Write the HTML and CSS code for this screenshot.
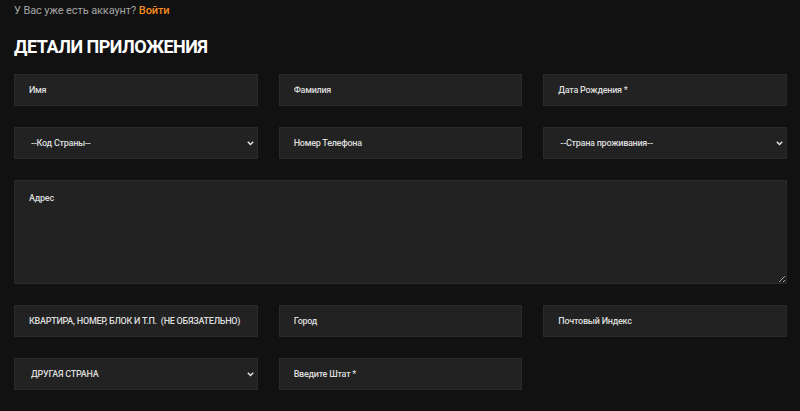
FILE: index.html
```html
<!DOCTYPE html>
<html lang="ru">
<head>
<meta charset="utf-8">
<link rel="stylesheet" href="styles.css">
</head>
<body>
<div class="page">
  <p class="login">У Вас уже есть аккаунт? <a href="#" class="login-link">Войти</a></p>
  <h2 class="title">ДЕТАЛИ ПРИЛОЖЕНИЯ</h2>
  <form class="form">
    <input class="field" type="text" placeholder="Имя">
    <input class="field" type="text" placeholder="Фамилия">
    <input class="field" type="text" placeholder="Дата Рождения *">

    <div class="select-wrap">
      <select class="field select"><option>--Код Страны--</option></select>
      <svg class="chevron" width="7" height="5" viewBox="0 0 7 5"><path d="M0.8 0.8 L3.5 3.6 L6.2 0.8" fill="none" stroke="#e6e6e6" stroke-width="1.4"/></svg>
    </div>
    <input class="field" type="text" placeholder="Номер Телефона">
    <div class="select-wrap">
      <select class="field select"><option>--Страна проживания--</option></select>
      <svg class="chevron" width="7" height="5" viewBox="0 0 7 5"><path d="M0.8 0.8 L3.5 3.6 L6.2 0.8" fill="none" stroke="#e6e6e6" stroke-width="1.4"/></svg>
    </div>

    <textarea class="field area" placeholder="Адрес"></textarea>

    <input class="field" type="text" placeholder="КВАРТИРА, НОМЕР, БЛОК И Т.П.  (НЕ ОБЯЗАТЕЛЬНО)">
    <input class="field" type="text" placeholder="Город">
    <input class="field" type="text" placeholder="Почтовый Индекс">

    <div class="select-wrap">
      <select class="field select"><option>ДРУГАЯ СТРАНА</option></select>
      <svg class="chevron" width="7" height="5" viewBox="0 0 7 5"><path d="M0.8 0.8 L3.5 3.6 L6.2 0.8" fill="none" stroke="#e6e6e6" stroke-width="1.4"/></svg>
    </div>
    <input class="field" type="text" placeholder="Введите Штат *">
  </form>
</div>
</body>
</html>
```
FILE: styles.css
```css
html, body {
  margin: 0;
  padding: 0;
  background: #111111;
}

body {
  font-family: Roboto, "Noto Sans", "Liberation Sans", sans-serif;
  color: #dddddd;
  overflow: hidden;
}

.page {
  padding: 3px 13px 0 14px;
}

.login {
  margin: 0;
  font-size: 11px;
  line-height: 16px;
  color: #a6a6a6;
  letter-spacing: -0.1px;
}

.login-link {
  color: #f58a1f;
  font-weight: 500;
  text-decoration: none;
}

.title {
  margin: 17px 0 16px;
  font-size: 18px;
  line-height: 22px;
  font-weight: 700;
  letter-spacing: -0.5px;
  color: #ffffff;
}

.form {
  display: grid;
  grid-template-columns: repeat(3, 1fr);
  column-gap: 21px;
  row-gap: 21px;
}

.field {
  box-sizing: border-box;
  width: 100%;
  height: 32px;
  margin: 0;
  padding: 0 14px;
  background: #222222;
  border: 1px solid #2a2a2a;
  border-radius: 0;
  color: #dddddd;
  font-family: Roboto, "Noto Sans", "Liberation Sans", sans-serif;
  font-size: 9px;
  font-weight: 500;
  letter-spacing: -0.25px;
  outline: none;
}

.field::placeholder {
  color: #dddddd;
  opacity: 1;
}

.select-wrap {
  position: relative;
}

.select {
  appearance: none;
  -webkit-appearance: none;
  padding-left: 16px;
}

.chevron {
  position: absolute;
  right: 4px;
  top: 14px;
}

.area {
  grid-column: 1 / -1;
  height: 104px;
  padding: 10px 14px;
  resize: vertical;
  line-height: 14px;
}
```
